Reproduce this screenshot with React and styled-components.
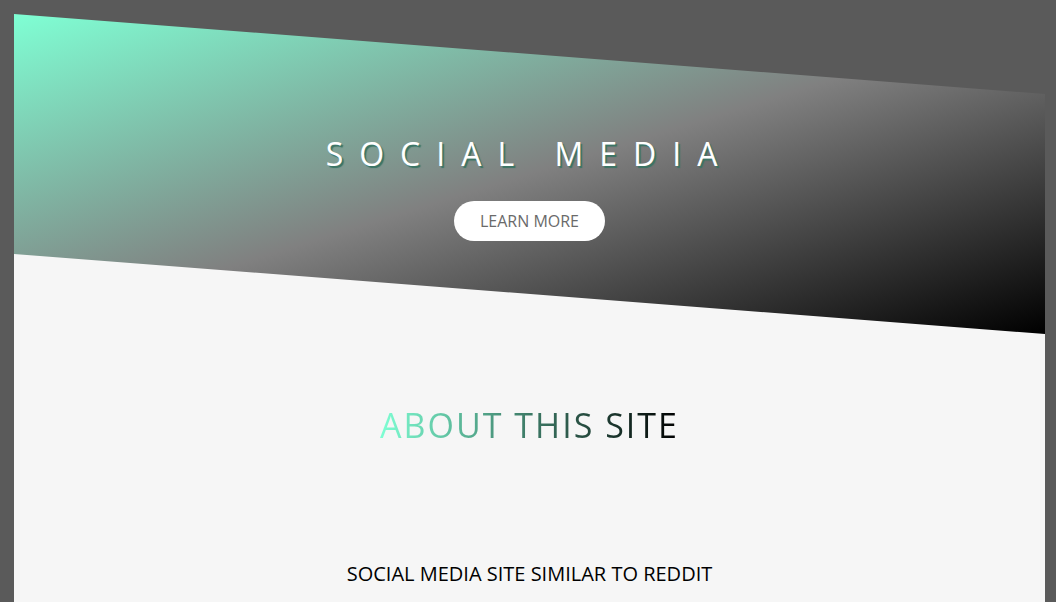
import React from 'react'
import styled, { createGlobalStyle } from 'styled-components'

const GlobalStyle = createGlobalStyle`
    html, body {
        margin: 0;
        padding: 0;
        background-color: #5a5a5a;
        font-family: "Open Sans", "Liberation Sans", sans-serif;
    }
`

function Hero() {
    return (
        <HeroSection>
            <Title>Social Media</Title>
            <LearnButton>Learn More</LearnButton>
        </HeroSection>
    )
}

function About() {
    return (
        <AboutSection>
            <Heading>About this site</Heading>
            <Text>Social media site similar to reddit</Text>
        </AboutSection>
    )
}

function App() {
    return (
        <>
            <GlobalStyle />
            <Page>
                <Hero />
                <About />
            </Page>
        </>
    )
}

export default App


const Page = styled.div`
    margin: 14px 11px 0 14px;
    display: flex;
    flex-direction: column;
`
const HeroSection = styled.header`
    position: relative;
    z-index: 1;
    box-sizing: border-box;
    height: 320px;
    padding-top: 117px;
    display: flex;
    flex-direction: column;
    align-items: center;
    gap: 24px;
    background: linear-gradient(to bottom right, #7fffd4 0%, #808080 50%, #000000 100%);
    clip-path: polygon(0 0, 100% 25%, 100% 100%, 0 75%);
`
const Title = styled.h1`
    margin: 0;
    color: #ffffff;
    font-size: 32px;
    font-weight: 400;
    line-height: 46px;
    letter-spacing: 0.5em;
    text-transform: uppercase;
    text-shadow: 2px 2px 1px #3a7464;
`
const LearnButton = styled.button`
    &:hover {
        cursor: pointer;
    }
    width: 151px;
    height: 40px;
    border: none;
    border-radius: 20px;
    background-color: #ffffff;
    color: #6a6a6a;
    font-family: "Open Sans", "Liberation Sans", sans-serif;
    font-size: 16px;
    text-transform: uppercase;
`
const AboutSection = styled.section`
    margin-top: -80px;
    padding: 147px 0 40px;
    min-height: 400px;
    background-color: #f6f6f6;
    display: flex;
    flex-direction: column;
    align-items: center;
`
const Heading = styled.h2`
    margin: 0;
    font-size: 34px;
    font-weight: 400;
    line-height: 48px;
    letter-spacing: 2px;
    text-transform: uppercase;
    background: linear-gradient(to right, #7fffd4 0%, #3d7a66 50%, #000000 100%);
    -webkit-background-clip: text;
    background-clip: text;
    color: transparent;
`
const Text = styled.p`
    margin: 111px 0 0;
    color: #000000;
    font-size: 20px;
    line-height: 28px;
    text-transform: uppercase;
`
